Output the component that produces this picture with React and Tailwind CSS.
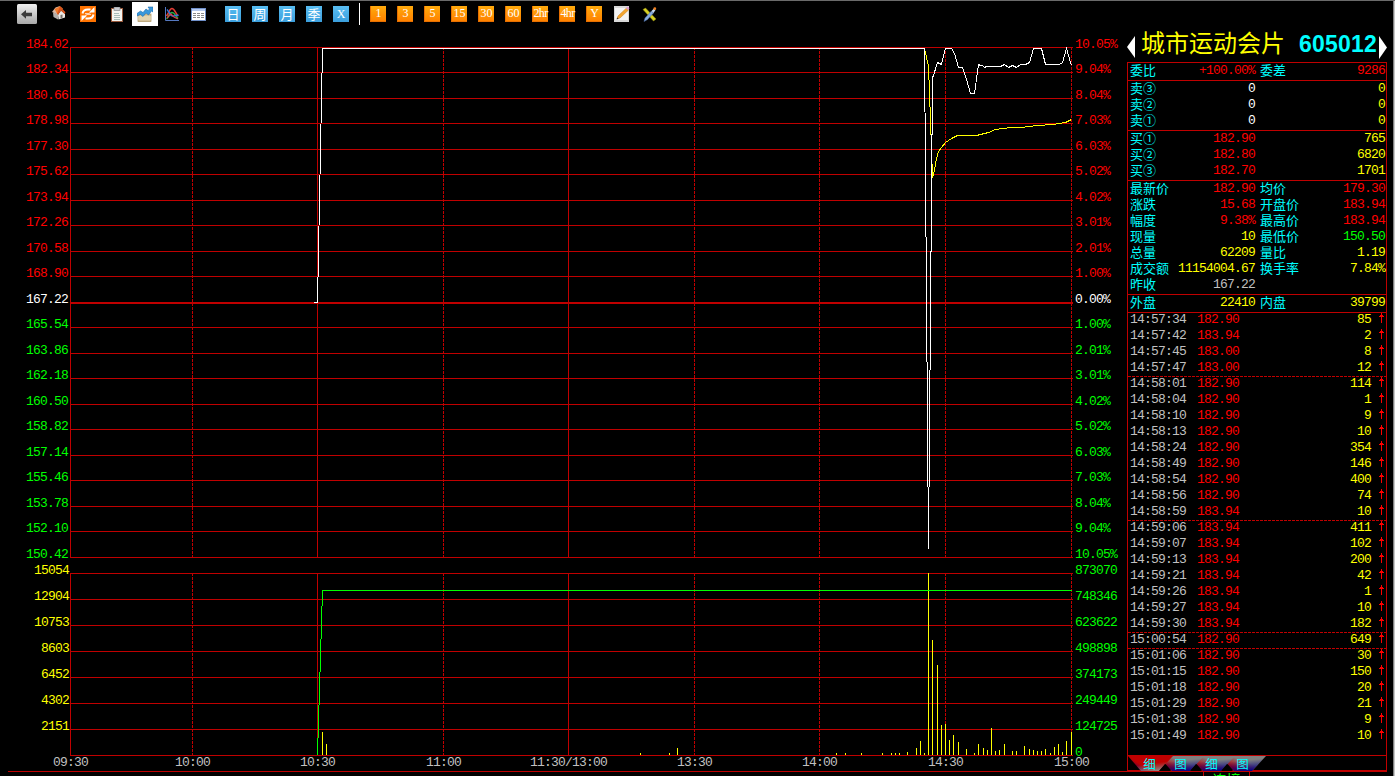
import React from "react";

const MONO = "font-['Liberation_Mono','Noto_Sans_CJK_SC',monospace] text-[13px] tracking-[-0.8px]";
const CJK = "font-['Noto_Sans_CJK_SC',sans-serif]";

const prices = ["184.02", "182.34", "180.66", "178.98", "177.30", "175.62", "173.94", "172.26", "170.58", "168.90", "167.22", "165.54", "163.86", "162.18", "160.50", "158.82", "157.14", "155.46", "153.78", "152.10", "150.42"];
const percents = ["10.05%", "9.04%", "8.04%", "7.03%", "6.03%", "5.02%", "4.02%", "3.01%", "2.01%", "1.00%", "0.00%", "1.00%", "2.01%", "3.01%", "4.02%", "5.02%", "6.03%", "7.03%", "8.04%", "9.04%", "10.05%"];
const volumes = ["15054", "12904", "10753", "8603", "6452", "4302", "2151"];
const amounts = ["873070", "748346", "623622", "498898", "374173", "249449", "124725", "0"];

const times = [
  ["09:30", "ml-[53px]"], ["10:00", "ml-[87px]"], ["10:30", "ml-[90px]"], ["11:00", "ml-[91px]"],
  ["11:30/13:00", "ml-[69px]"], ["13:30", "ml-[70px]"], ["14:00", "ml-[90px]"], ["14:30", "ml-[91px]"], ["15:00", "ml-[91px]"],
];

const bars = [
  [322, 732], [326, 744], [640, 753], [669, 753], [677, 748], [836, 753], [845, 753], [861, 753], [882, 753], [891, 753],
  [895, 753], [899, 753], [907, 752], [916, 748], [920, 741], [924, 753], [928, 573], [932, 640], [937, 665], [941, 725],
  [945, 724], [949, 740], [953, 735], [958, 742], [966, 749], [974, 753], [978, 744], [983, 748], [987, 750], [991, 728],
  [995, 751], [999, 750], [1004, 744], [1012, 751], [1016, 751], [1024, 746], [1029, 749], [1033, 750], [1037, 751],
  [1041, 751], [1045, 749], [1050, 753], [1054, 747], [1058, 744], [1062, 752], [1066, 741], [1071, 732],
];

const whiteLine =
  "313.5,302.5 317.5,302.5 322.5,48.5 924.5,48.5 928.5,548.5 932.5,77.5 933.5,75.5 937.5,62.5 939.5,63.5 941.5,64.5 945.5,48.5 951.5,48.5 954.5,53.5 958.5,67.5 962.5,67.5 966.5,79.5 970.5,93.5 974.5,93.5 978.5,64.5 980.5,65.5 982.5,65.5 984.5,67.5 986.5,66.5 1000.5,66.5 1004.5,64.5 1008.5,67.5 1012.5,65.5 1016.5,67.5 1020.5,64.5 1025.5,64.5 1029.5,62.5 1033.5,48.5 1041.5,48.5 1045.5,64.5 1059.5,64.5 1062.5,62.5 1066.5,48.5 1070.5,62.5 1071.5,65.5";
const yellowLine =
  "924.5,48.5 928.5,66.5 930.5,120.5 932.5,177.5 934.5,170.5 936.5,158.5 938.5,151.5 941.5,147.5 945.5,142.5 951.5,138.5 957.5,135.5 976.5,135.5 988.5,132.5 995.5,129.5 1010.5,127.5 1020.5,127.5 1037.5,125.5 1053.5,124.5 1065.5,122.5 1071.5,119.5";

const upperY = Array.from({ length: 21 }, (_, i) => 47 + Math.floor(25.5 * i));
const lowerY = Array.from({ length: 8 }, (_, i) => 573 + 26 * i);
const verticals = [[70, 0], [192, 1], [317, 0], [443, 1], [568, 0], [694, 1], [819, 1], [945, 1], [1071, 1]];

function Chart() {
  return (
    <svg className="block shrink-0" width="1006" height="719" viewBox="69 37 1006 719" shapeRendering="crispEdges">
      <g stroke="#c00000" fill="none">
        {verticals.map(([x, dash]) => (
          <g key={x} strokeDasharray={dash ? "3 1" : undefined}>
            <line x1={x + 0.5} x2={x + 0.5} y1="47" y2="558" />
            <line x1={x + 0.5} x2={x + 0.5} y1="573" y2="756" />
          </g>
        ))}
      </g>
      <g fill="#c00000">
        {upperY.map((y) => <rect key={y} x="70" y={y} width="1003" height={y === 302 ? 2 : 1} />)}
        {lowerY.map((y) => <rect key={y} x="70" y={y} width="1003" height="1" />)}
      </g>
      <g fill="#ffff00">
        {bars.map(([x, y]) => <rect key={x} x={x} y={y} width="1" height={755 - y} />)}
      </g>
      <polyline points="317.5,755 322.5,590.5 1072,590.5" fill="none" stroke="#00ff00" />
      <polyline points={yellowLine} fill="none" stroke="#ffff00" />
      <polyline points={whiteLine} fill="none" stroke="#ffffff" />
    </svg>
  );
}

function rowHeight(i) {
  if (i === 20) return "h-[16px]";
  return i % 2 ? "h-[26px]" : "h-[25px]";
}
function rowColor(i) {
  return i < 10 ? "text-[#ff0000]" : i === 10 ? "text-white" : "text-[#00ff00]";
}

function Axis({ upper, lower, lowerColor, className, upperPad = "" }) {
  return (
    <div className={`flex flex-col leading-[15px] ${MONO} ${className}`}>
      {upper.map((t, i) => <div key={i} className={`shrink-0 ${upperPad} ${rowHeight(i)} ${rowColor(i)}`}>{t}</div>)}
      {lower.map((t) => <div key={t} className={`h-[26px] shrink-0 ${lowerColor}`}>{t}</div>)}
    </div>
  );
}

function Toolbar() {
  return (
    <div className="flex h-[26px] shrink-0 items-center">
      <svg className="ml-[17px] shrink-0" width="20" height="20" viewBox="0 0 20 20">
        <defs>
          <linearGradient id="btn" x1="0" y1="0" x2="0" y2="1"><stop offset="0" stopColor="#f0f0f0" /><stop offset="1" stopColor="#a8a8a8" /></linearGradient>
        </defs>
        <rect width="20" height="20" rx="1.5" fill="url(#btn)" />
        <path d="M4 10.3 9 6v2.8h6v3.4H9v2.6z" fill="#3c3c3c" />
      </svg>
      <svg className="-mt-[2px] ml-[15px] shrink-0" width="14" height="14" viewBox="0 0 14 14">
        <path d="M1 6.500 6 8v5.500L1.500 11z" fill="#b4b0ac" />
        <path d="M6 8.500l3-4 4 3.500v3.500L6.500 13.500z" fill="#ece8e4" />
        <path d="M0 6 3.500 1.500 8 0 5.500 8.500z" fill="#d9b8a4" />
        <path d="M2.500 3 8 .3l3 2.200-3 2.500-2.500 3.500z" fill="#f07a2c" />
        <path d="M8 .3l5.500 6L12.500 8 9 4.500 6 9l-.8-1.500z" fill="#d8541c" />
        <path d="M8.500 9l2-.6v3.400l-2 .8z" fill="#77706a" />
      </svg>
      <svg className="ml-[14px] shrink-0" width="16" height="16" viewBox="0 0 16 16">
        <rect width="16" height="16" fill="#ff7300" />
        <path d="M2.500 7.500C3 4.500 5 3.500 8 3.500h2.500" fill="none" stroke="#fff" strokeWidth="2" />
        <path d="M9 6.500h5.500V1z" fill="#fff" />
        <path d="M13.500 8.500c-.5 3-2.500 4-5.500 4H5.500" fill="none" stroke="#fff" strokeWidth="2" />
        <path d="M7 9.500H1.500V15z" fill="#fff" />
        <path d="M5 7.500h4l2-1M5 9.500l2-1h4" stroke="#fff" strokeWidth=".7" fill="none" />
      </svg>
      <svg className="ml-[15px] shrink-0" width="12" height="15" viewBox="0 0 12 15">
        <rect x=".5" y="1.500" width="11" height="13" fill="#f4f5f0" stroke="#97583b" />
        <rect x="3" y="0" width="6" height="3.500" fill="#c9ccd0" stroke="#77797c" strokeWidth=".6" />
        <path d="M3 6.500h5M3 8.500h6M3 10.500h6M3 12.500h6" stroke="#a9bdb8" />
      </svg>
      <div className="ml-[9px] flex h-6 w-[26px] shrink-0 items-center justify-center bg-white">
        <svg width="16" height="16" viewBox="0 0 16 16">
          <rect x="1" y="8" width="13" height="7.500" fill="#d6c39b" stroke="#ad9460" strokeWidth=".7" />
          <path d="M1 11h13M1 13h13" stroke="#efe4c5" />
          <path d="M0 10V7.500L3.500 5 6 6.500 9 3l2 1.500L12.500 3 11 1h5v5l-1.500-1-3 4L9 7l-3 3.500L3.500 8.500z" fill="#3898dc" stroke="#1c6cae" strokeWidth=".6" />
        </svg>
      </div>
      <svg className="ml-[7px] shrink-0" width="14" height="14" viewBox="0 0 14 14" fill="none">
        <path d="M.5 0v13.500H14" stroke="#5578c0" />
        <path d="M1.500 12c2.500-2 2.500-6.500 5.500-6.500s3 3.500 6 6" stroke="#23b046" strokeWidth="1.500" />
        <path d="M1.500 9C4 6 4.500 1.500 7 1.500s3.500 5 6 7.500" stroke="#e23b35" strokeWidth="1.600" />
        <path d="M2 2.500c2 2 3 6 5.500 6.500s4-1.500 6-.5" stroke="#2f78e0" strokeWidth="1.500" />
        <path d="M2 11l4-4 3 3 4 2" stroke="#d83e47" strokeWidth="1.100" />
      </svg>
      <svg className="ml-[12px] shrink-0" width="15" height="13" viewBox="0 0 15 13" shapeRendering="crispEdges">
        <rect width="15" height="13" fill="#6f8fc8" />
        <rect x="1" y="1" width="13" height="2" fill="#b4c9ee" />
        <rect x="1" y="3" width="13" height="9" fill="#fff" />
        <path d="M2 5.500h11M2 7.500h11M2 9.500h11" stroke="#8a8a8a" strokeDasharray="3 1" />
      </svg>
      <div className="ml-[19px] flex gap-[11px]">
        {["日", "周", "月", "季", "X"].map((t) => (
          <div key={t} className={`flex size-4 items-center justify-center bg-linear-to-b from-[#58bdf2] to-[#3b9fdd] text-white ${t === "X" ? "font-['Liberation_Serif',serif] text-[12px] leading-[16px]" : `${CJK} text-[13px] leading-[14px]`}`}>{t}</div>
        ))}
      </div>
      <div className="ml-[10px] h-[22px] w-px bg-white" />
      <div className="ml-[10px] flex gap-[11px]">
        {["1", "3", "5", "15", "30", "60", "2hr", "4hr", "Y"].map((t) => (
          <div key={t} className={`flex size-4 items-center justify-center border-b border-l border-[#e66f00] bg-linear-to-b from-[#ffaa0c] to-[#ff8200] font-['Liberation_Serif',serif] text-[12px] leading-[15px] text-white ${t.length > 2 ? "tracking-[-0.6px]" : ""}`}>{t}</div>
        ))}
      </div>
      <svg className="ml-[12px] shrink-0" width="16" height="16" viewBox="0 0 16 16">
        <rect x="0" y="0" width="15" height="16" fill="#d8d8d8" />
        <rect x="1" y="2" width="13" height="12" fill="#f4f4f4" />
        <path d="M3 13 4 10 12.500 2l2 2L6 12z" fill="#f4a630" stroke="#c67d18" strokeWidth=".5" />
        <path d="M12 2.200 13.800.5l1.700 1.700-1.500 1.700z" fill="#d89ad0" />
        <path d="M2.500 13.500l1-2 1 1z" fill="#333" />
      </svg>
      <svg className="ml-[12px] shrink-0" width="15" height="15" viewBox="0 0 15 15">
        <path d="M1 2.500 3.500 1 14 12l-2.500 2z" fill="#d6cf22" stroke="#8f8a12" strokeWidth=".5" />
        <path d="M2 14.500 3 11 9.500 4l2 2L5.500 12.500z" fill="#86a9de" stroke="#4a6ea8" strokeWidth=".5" />
        <path d="M9.500 4 12 1.500l1.500 1.500-2 3z" fill="#c9d9ef" />
        <circle cx="12.800" cy="1.700" r="1.400" fill="#f08020" />
      </svg>
    </div>
  );
}

function Quote({ label, value, color, className }) {
  return (
    <div className={`flex h-4 items-start justify-between pr-px ${className}`}>
      <span className={`${CJK} text-[13px] leading-[13px] text-[#00ffff]`}>{label}</span>
      <span className={`${MONO} leading-[16px] ${color}`}>{value}</span>
    </div>
  );
}

const R = "text-[#ff0000]", Y = "text-[#ffff00]", W = "text-white", G = "text-[#00ff00]", S = "text-[#c0c0c0]";

const sections = [
  { h: "h-[18px]", rows: [["委比", "+100.00%", R, "委差", "9286", R]] },
  { h: "h-[50px]", rows: [["卖③", "0", W, "", "0", Y], ["卖②", "0", W, "", "0", Y], ["卖①", "0", W, "", "0", Y]] },
  { h: "h-[50px]", rows: [["买①", "182.90", R, "", "765", Y], ["买②", "182.80", R, "", "6820", Y], ["买③", "182.70", R, "", "1701", Y]] },
  {
    h: "h-[114px]",
    rows: [
      ["最新价", "182.90", R, "均价", "179.30", R],
      ["涨跌", "15.68", R, "开盘价", "183.94", R],
      ["幅度", "9.38%", R, "最高价", "183.94", R],
      ["现量", "10", Y, "最低价", "150.50", G],
      ["总量", "62209", Y, "量比", "1.19", Y],
      ["成交额", "11154004.67", Y, "换手率", "7.84%", Y],
      ["昨收", "167.22", S, "", "", S],
    ],
  },
  { h: "h-[18px]", rows: [["外盘", "22410", Y, "内盘", "39799", Y]] },
];

const ticks = [
  ["14:57:34", "182.90", 85], ["14:57:42", "183.94", 2], ["14:57:45", "183.00", 8], ["14:57:47", "183.00", 12, true],
  ["14:58:01", "182.90", 114], ["14:58:04", "182.90", 1], ["14:58:10", "182.90", 9], ["14:58:13", "182.90", 10],
  ["14:58:24", "182.90", 354], ["14:58:49", "182.90", 146], ["14:58:54", "182.90", 400], ["14:58:56", "182.90", 74],
  ["14:58:59", "183.94", 10, true], ["14:59:06", "183.94", 411], ["14:59:07", "183.94", 102], ["14:59:13", "183.94", 200],
  ["14:59:21", "183.94", 42], ["14:59:26", "183.94", 1], ["14:59:27", "183.94", 10], ["14:59:30", "183.94", 182, true],
  ["15:00:54", "182.90", 649, true], ["15:01:06", "182.90", 30], ["15:01:15", "182.90", 150], ["15:01:18", "182.90", 20],
  ["15:01:29", "182.90", 21], ["15:01:38", "182.90", 9], ["15:01:49", "182.90", 10],
];

function Tick({ row: [time, price, vol, dashed] }) {
  return (
    <div className="flex h-4 shrink-0 flex-col">
      <div className={`flex h-[15px] items-start leading-[13px] ${MONO}`}>
        <span className="ml-[2px] w-[67px] text-[#c0c0c0]">{time}</span>
        <span className="w-[60px] text-[#ff0000]">{price}</span>
        <span className="ml-auto text-[#ffff00]">{vol}</span>
        <svg className="mr-[2px] ml-[8px] block shrink-0" width="5" height="10" viewBox="0 0 5 10" shapeRendering="crispEdges">
          <path d="M2 0h1v10h-1zM1 2h3v1h-3zM0 3h5v1h-5z" fill="#ff0000" />
        </svg>
      </div>
      {dashed && <div className="h-px bg-[repeating-linear-gradient(90deg,#c00000_0_3px,#000_3px_4px)]" />}
    </div>
  );
}

function Tabs() {
  return (
    <svg className="block overflow-visible" width="138" height="15" viewBox="0 0 138 15">
      <defs>
        <linearGradient id="tabOn" x1="0" y1="0.9" x2="0.9" y2="0.4">
          <stop offset="0" stopColor="#000080" /><stop offset=".4" stopColor="#c00000" /><stop offset="1" stopColor="#c00000" />
        </linearGradient>
        <linearGradient id="tabOnEdge" x1="0.4" y1="0.3" x2="0.7" y2="1">
          <stop offset=".3" stopColor="#808080" stopOpacity="0" /><stop offset="1" stopColor="#909090" />
        </linearGradient>
        <linearGradient id="tabRed" x1="0.15" y1="0.6" x2="0.5" y2="0.3">
          <stop offset="0" stopColor="#c00000" /><stop offset="1" stopColor="#808080" />
        </linearGradient>
        <linearGradient id="tabBlue" x1="0.5" y1="0.3" x2="0.7" y2="1">
          <stop offset="0" stopColor="#000080" stopOpacity="0" /><stop offset="1" stopColor="#000090" />
        </linearGradient>
      </defs>
      {[3, 2, 1].map((k) => (
        <g key={k} transform={`translate(${k * 31 - 1} 0)`}>
          <path d="M0 0h46L32 15H14z" fill="url(#tabRed)" />
          <path d="M0 0h46L32 15H14z" fill="url(#tabBlue)" />
        </g>
      ))}
      <path d="M0 0h45L31 15H13z" fill="url(#tabOn)" />
      <path d="M0 0h45L31 15H13z" fill="url(#tabOnEdge)" />
      <path d="M31 15l6-7 6 7zM62 15l6-7 6 7zM93 15l6-7 6 7z" fill="#000" />
      {["细", "图", "细", "图"].map((t, k) => (
        <text key={k} x={21.5 + k * 31} y="13" textAnchor="middle" fontSize="12.500" fill="#00ffff" fontFamily="'Noto Sans CJK SC', sans-serif">{t}</text>
      ))}
    </svg>
  );
}

export default function App() {
  return (
    <div className="flex h-[776px] w-[1395px] flex-col overflow-hidden border-t border-[#6a6a6a] bg-black">
      <div className="flex min-h-0 flex-1">
        <main className="flex w-[1127px] shrink-0 flex-col">
          <Toolbar />
          <div className="mt-[10px] flex h-[719px] shrink-0">
            <Axis upper={prices} upperPad="pr-px" lower={volumes} lowerColor="text-[#ffff00]" className="w-[69px] text-right" />
            <Chart />
            <Axis upper={percents} lower={amounts} lowerColor="text-[#00ff00]" className="w-[52px]" />
          </div>
          <div className={`flex h-[15px] shrink-0 leading-[13px] text-[#c0c0c0] ${MONO}`}>
            {times.map(([t, m]) => <span key={t} className={`shrink-0 ${m} ${t.length > 5 ? "w-[77px]" : "w-[35px]"}`}>{t}</span>)}
          </div>
          <div className="ml-2 h-px shrink-0 bg-[#c00000]" />
        </main>

        <aside className="flex w-[260px] shrink-0 flex-col">
          <header className="flex h-[61px] shrink-0 items-start pt-[35px]">
            <svg className="shrink-0" width="8" height="22" viewBox="0 0 8 22"><path d="M8 0v22L0 11z" fill="#fff" /></svg>
            <span className={`-mt-[10px] ml-[6px] w-[144px] shrink-0 text-[24px] leading-[32px] whitespace-nowrap text-[#ffff00] ${CJK}`}>城市运动会片</span>
            <span className="-mt-[5px] ml-[14px] w-[80px] shrink-0 font-['Liberation_Sans',sans-serif] text-[23px] leading-[26px] font-bold tracking-[0.2px] text-[#00ffff]">605012</span>
            <svg className="shrink-0" width="8" height="23" viewBox="0 0 8 23"><path d="M0 0v23l8-11.500z" fill="#fff" /></svg>
          </header>
          <div className="flex h-[710px] shrink-0 flex-col border border-b-2 border-[#c00000]">
            {sections.map((s, i) => (
              <section key={i} className={`shrink-0 border-b border-[#c00000] ${s.h}`}>
                {s.rows.map(([a, v, c, b, v2, c2]) => (
                  <div key={a} className="flex">
                    <Quote label={a} value={v} color={c} className="w-[128px] pl-[2px]" />
                    <Quote label={b} value={v2} color={c2} className="w-[130px] pl-[4px]" />
                  </div>
                ))}
              </section>
            ))}
            <div className="flex h-[442px] shrink-0 flex-col">
              {ticks.map((t) => <Tick key={t[0]} row={t} />)}
            </div>
            <div className="h-[15px] shrink-0 border-t border-[#c00000]"><Tabs /></div>
          </div>
          <div className={`ml-[76px] h-[4px] w-[47px] overflow-hidden border-x border-[#c00000] text-center text-[14px] leading-[14px] text-[#00ff00] ${CJK}`}>连接</div>
        </aside>
        <div className="ml-auto w-[2px] border-l border-[#808080] bg-[#c8c8c8]" />
      </div>
    </div>
  );
}
